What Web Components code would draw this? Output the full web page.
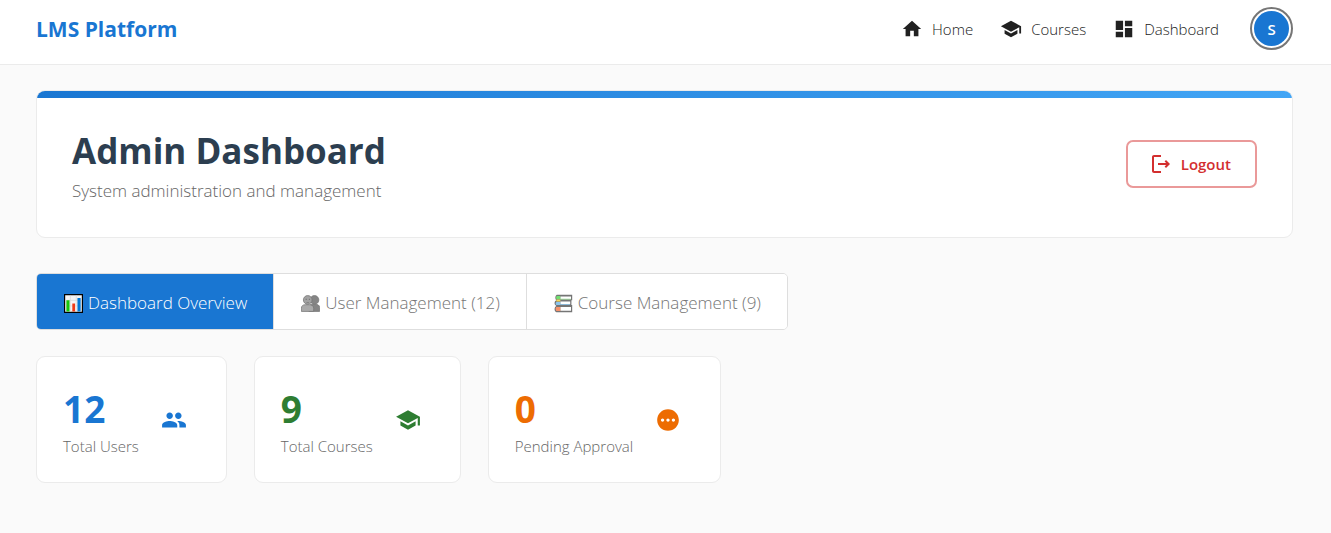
<!DOCTYPE html>
<html lang="en">
<head>
<meta charset="utf-8">
<meta name="viewport" content="width=device-width, initial-scale=1">
<title>LMS Platform</title>
<style>
  body { margin: 0; min-height: 100vh; background: #fafafa; color: #212121; font-family: "Open Sans", "Noto Sans", sans-serif; }
</style>
</head>
<body>
<lms-app></lms-app>
<script>
const ICONS = {
  home: '<path d="M10 20v-6h4v6h5v-8h3L12 3 2 12h3v8z"/>',
  school: '<path d="M5 13.18v4L12 21l7-3.82v-4L12 17l-7-3.82zM12 3 1 9l11 6 9-4.91V17h2V9L12 3z"/>',
  dashboard: '<path d="M3 13h8V3H3v10zm0 8h8v-6H3v6zm10 0h8V11h-8v10zm0-18v6h8V3h-8z"/>',
  people: '<path d="M16 11c1.66 0 2.99-1.34 2.99-3S17.66 5 16 5c-1.66 0-3 1.34-3 3s1.34 3 3 3zm-8 0c1.66 0 2.99-1.34 2.99-3S9.66 5 8 5C6.34 5 5 6.34 5 8s1.34 3 3 3zm0 2c-2.33 0-7 1.17-7 3.5V19h14v-2.500c0-2.330-4.670-3.500-7-3.500zm8 0c-.29 0-.62.02-.97.05 1.16.84 1.970 1.970 1.970 3.450V19h6v-2.500c0-2.330-4.670-3.500-7-3.500z"/>',
  pending: '<path d="M12 2C6.480 2 2 6.480 2 12s4.480 10 10 10 10-4.480 10-10S17.520 2 12 2zM7 13.500c-.83 0-1.500-.67-1.500-1.500s.67-1.500 1.500-1.500 1.500.67 1.500 1.500-.67 1.500-1.500 1.500zm5 0c-.83 0-1.500-.67-1.500-1.500s.67-1.500 1.500-1.500 1.500.67 1.500 1.500-.67 1.500-1.500 1.500zm5 0c-.83 0-1.500-.67-1.500-1.500s.67-1.500 1.500-1.500 1.500.67 1.500 1.500-.67 1.500-1.500 1.500z"/>',
  logout: '<path d="m17 8-1.410 1.410L17.170 11H9v2h8.170l-1.580 1.580L17 16l4-4zM5 5h7V3H5c-1.100 0-2 .9-2 2v14c0 1.100.9 2 2 2h7v-2H5V5z"/>',
  chart: '<path fill="#000" d="M0 0h24v24H0z"/><path fill="#f5f5f5" d="M1.500 1.500h21v21h-21z"/><path stroke="#dcdcdc" d="M8 2v20M15.500 2v20M2 8h20M2 15h20"/><path fill="#16c60c" d="M3 8h4v14H3z"/><path fill="#f03a17" d="M10.500 12h3.500v10h-3.500z"/><path fill="#0078d7" d="M17 5h4v17h-4z"/>',
  users: '<g stroke="#777" stroke-width="1"><path fill="#858585" d="M10 22v-5c0-3 2-4 5-4h3c3 0 5.500 1 5.500 4v5z"/><circle cx="17" cy="7.500" r="5.500" fill="#858585"/><path fill="#aaa" d="M.5 22v-4c0-3 2-4.500 5-4.500h5c3 0 5.500 1.500 5.500 4.500v4z"/><circle cx="8.500" cy="7.500" r="5.500" fill="#a2a2a2"/></g><path fill="#666" d="M6 6h1v1.500H6zM10 6h1v1.500h-1zM7 10h3v.8H7z"/>',
  books: '<path fill="#757575" d="M3.500 1H23v7h-1v6h1v9H3c-3-1-3-7 0-8-3-1-3-6 0-7-2-2-1.500-6 .5-7z"/><path fill="#fff" d="M8 3h13.500v3.500H8zM8 9.500h12.500v3.500H8zM8 16.500h13.500v4.500H8z"/><path fill="#72df72" d="M3.500 2.500H8V6.500H3.500c-1.200-1-1.200-3 0-4z"/><path fill="#f6d858" d="M3 7h5v2.500H3z"/><path fill="#8ac5ee" d="M3 10h5v4H3c-1.200-1-1.200-3 0-4z"/><path fill="#f7926c" d="M3 16.500h5v5H3c-1.300-1-1.300-4 0-5z"/><path fill="#8fdb8a" d="M8 6h13v1H8z"/><path fill="#8ac5ee" d="M8 12.500h12v1H8z"/>'
};

class LmsIcon extends HTMLElement {
  connectedCallback() {
    const root = this.attachShadow({ mode: 'open' });
    root.innerHTML = `<style>
      :host { display: inline-flex; flex: none; width: var(--icon-size, 24px); height: var(--icon-size, 24px); }
      svg { width: 100%; height: 100%; fill: currentColor; }
    </style><svg viewBox="0 0 24 24" aria-hidden="true">${ICONS[this.getAttribute('name')]}</svg>`;
  }
}
customElements.define('lms-icon', LmsIcon);

class LmsNavLink extends HTMLElement {
  connectedCallback() {
    this.attachShadow({ mode: 'open' }).innerHTML = `<style>
      :host { display: block; --icon-size: 22px; }
      a { display: flex; align-items: center; gap: 9px; color: #212121; text-decoration: none; font-size: 15px; font-weight: 300; line-height: 24px; }
    </style><a href="#${this.getAttribute('icon')}"><lms-icon name="${this.getAttribute('icon')}"></lms-icon><slot></slot></a>`;
  }
}
customElements.define('lms-nav-link', LmsNavLink);

class LmsHeader extends HTMLElement {
  connectedCallback() {
    this.attachShadow({ mode: 'open' }).innerHTML = `<style>
      :host { display: block; background: #fff; border-bottom: 1px solid #ebebeb; }
      header { display: flex; align-items: center; justify-content: space-between; padding: 7px 38px 14px 36px; }
      .brand { color: #1976d2; font-size: 21px; line-height: 32px; font-weight: 700; text-decoration: none; }
      nav { display: flex; align-items: center; gap: 27px; }
      button { width: 43px; height: 43px; margin-left: 4px; padding: 2px; border: 2px solid #767676; border-radius: 50%; background: #1976d2 content-box; color: #fff; font: 600 15px/36px "Open Sans", sans-serif; }
    </style>
    <header><a class="brand" href="#home">LMS Platform</a>
      <nav aria-label="Main">
        <lms-nav-link icon="home">Home</lms-nav-link>
        <lms-nav-link icon="school">Courses</lms-nav-link>
        <lms-nav-link icon="dashboard">Dashboard</lms-nav-link>
        <button type="button" aria-haspopup="menu">S</button>
      </nav></header>`;
  }
}
customElements.define('lms-header', LmsHeader);

class LmsHero extends HTMLElement {
  connectedCallback() {
    this.attachShadow({ mode: 'open' }).innerHTML = `<style>
      :host { display: block; border: 1px solid #ebebeb; border-radius: 9px; background: #fff; overflow: hidden; }
      .bar { height: 7px; background: linear-gradient(90deg, #1976d2, #42a5f5); }
      .row { display: flex; align-items: center; justify-content: space-between; gap: 24px; padding: 26px 35px 33px; }
      ::slotted(h1) { margin: 0; color: #2c3e50; font-size: 35px; line-height: 54px; font-weight: 700; }
      ::slotted(p) { margin: 0; color: #666; font-size: 17px; line-height: 26px; font-weight: 300; }
      button { display: flex; align-items: center; justify-content: center; gap: 8px; height: 48px; padding: 0 24px 0 21px; border: 2px solid #ea9999; border-radius: 7px; background: #fff; color: #d32f2f; font: 600 15px/24px "Open Sans", sans-serif; --icon-size: 24px; }
    </style>
    <div class="bar"></div>
    <div class="row"><div><slot></slot></div>
      <button type="button"><lms-icon name="logout"></lms-icon>Logout</button></div>`;
  }
}
customElements.define('lms-hero', LmsHero);

class LmsTab extends HTMLElement {
  connectedCallback() {
    const selected = this.hasAttribute('selected');
    this.attachShadow({ mode: 'open' }).innerHTML = `<style>
      :host { display: block; --icon-size: 19px; }
      :host(:not(:last-child)) { border-right: 1px solid #dedede; }
      button { display: flex; align-items: center; justify-content: center; gap: 5px; height: 55px; padding: 3px 26px 0 27px; border: 0; background: #fff; color: #757575; font: 350 17px/24px "Open Sans", sans-serif; }
      :host([selected]) button { background: #1976d2; color: #fff; font-weight: 300; }
    </style><button type="button" role="tab" aria-selected="${selected}"><lms-icon name="${this.getAttribute('icon')}"></lms-icon><slot></slot></button>`;
  }
}
customElements.define('lms-tab', LmsTab);

class LmsTabs extends HTMLElement {
  connectedCallback() {
    this.attachShadow({ mode: 'open' }).innerHTML = `<style>
      :host { display: flex; width: fit-content; border: 1px solid #dedede; border-radius: 5px; overflow: hidden; }
    </style><slot></slot>`;
    this.setAttribute('role', 'tablist');
  }
}
customElements.define('lms-tabs', LmsTabs);

class LmsStat extends HTMLElement {
  connectedCallback() {
    this.attachShadow({ mode: 'open' }).innerHTML = `<style>
      :host { display: flex; align-items: center; gap: 22px; padding: 25px 39px 25px 26px; border: 1px solid #ebebeb; border-radius: 9px; background: #fff; --icon-size: 26px; }
      .value { color: var(--tone); font-size: 37px; line-height: 54px; font-weight: 700; }
      .label { color: #666; font-size: 15px; line-height: 21px; font-weight: 300; white-space: nowrap; }
      lms-icon { color: var(--tone); }
    </style><div><div class="value">${this.getAttribute('value')}</div><div class="label"><slot></slot></div></div>
    <lms-icon name="${this.getAttribute('icon')}"></lms-icon>`;
  }
}
customElements.define('lms-stat', LmsStat);

class LmsApp extends HTMLElement {
  connectedCallback() {
    this.attachShadow({ mode: 'open' }).innerHTML = `<style>
      :host { display: block; }
      main { padding: 25px 38px 48px 36px; }
      lms-tabs { margin: 35px 0 26px; }
      .stats { display: flex; flex-wrap: wrap; gap: 27px; }
      .blue { --tone: #1976d2; } .green { --tone: #2e7d32; } .orange { --tone: #ed6c02; }
    </style>
    <lms-header></lms-header>
    <main>
      <lms-hero><h1>Admin Dashboard</h1><p>System administration and management</p></lms-hero>
      <lms-tabs>
        <lms-tab icon="chart" selected>Dashboard Overview</lms-tab>
        <lms-tab icon="users">User Management (12)</lms-tab>
        <lms-tab icon="books">Course Management (9)</lms-tab>
      </lms-tabs>
      <section class="stats" aria-label="Statistics">
        <lms-stat class="blue" value="12" icon="people">Total Users</lms-stat>
        <lms-stat class="green" value="9" icon="school">Total Courses</lms-stat>
        <lms-stat class="orange" value="0" icon="pending">Pending Approval</lms-stat>
      </section>
    </main>`;
  }
}
customElements.define('lms-app', LmsApp);
</script>
</body>
</html>
